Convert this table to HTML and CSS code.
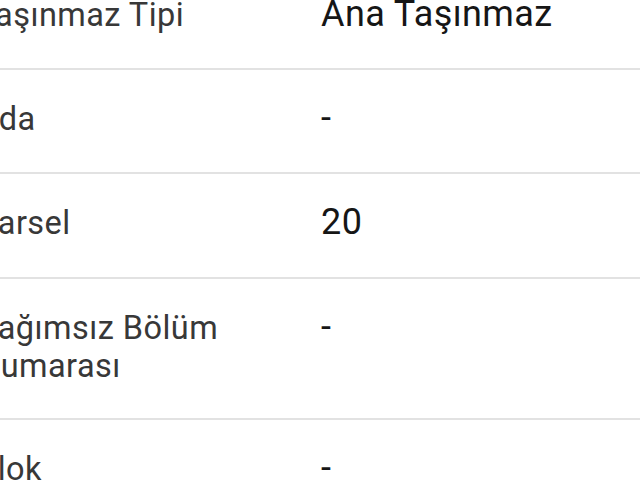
FILE: index.html
```html
<!DOCTYPE html>
<html lang="tr">
<head>
<meta charset="utf-8">
<link rel="stylesheet" href="styles.css">
</head>
<body>
<div class="details">
  <div class="row">
    <div class="label">Taşınmaz Tipi</div>
    <div class="value">Ana Taşınmaz</div>
  </div>
  <div class="row">
    <div class="label">Ada</div>
    <div class="value">-</div>
  </div>
  <div class="row">
    <div class="label">Parsel</div>
    <div class="value">20</div>
  </div>
  <div class="row">
    <div class="label">Bağımsız Bölüm Numarası</div>
    <div class="value">-</div>
  </div>
  <div class="row">
    <div class="label">Blok</div>
    <div class="value">-</div>
  </div>
</div>
</body>
</html>
```

FILE: styles.css
```css
html, body {
  margin: 0;
  padding: 0;
  background: #ffffff;
  overflow: hidden;
}

body {
  font-family: Roboto, "Noto Sans", sans-serif;
}

.details {
  margin-top: -34px;
  margin-left: -23px;
}

.row {
  display: grid;
  grid-template-columns: 344px 1fr;
  align-items: baseline;
  padding: 27px 0 33px;
  border-bottom: 2px solid #e2e2e2;
}

.label {
  font-size: 32.5px;
  line-height: 1.172;
  letter-spacing: 0.45px;
  color: #383838;
  padding-right: 40px;
}

.value {
  font-size: 36px;
  line-height: 1.172;
  letter-spacing: 0.4px;
  color: #161616;
}
```
